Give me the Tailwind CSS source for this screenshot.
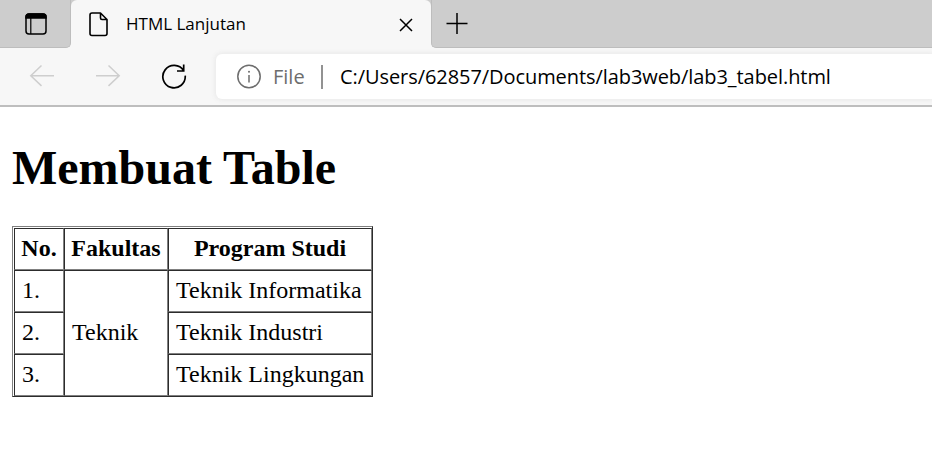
<!DOCTYPE html>
<html lang="id">
<head>
<meta charset="utf-8">
<title>HTML Lanjutan</title>
<script src="https://cdn.jsdelivr.net/npm/@tailwindcss/browser@4"></script>
</head>
<body class="w-[932px] h-[462px] overflow-hidden bg-white text-black">
<header class="h-[107px] bg-[#f7f7f7] border-b-2 border-[#bebebe] font-['Open_Sans',sans-serif]">
  <div class="flex h-12 bg-[#f7f7f7]">
    <div class="w-[71px] h-12 bg-[#cdcdcd] rounded-br-[5px] border-b border-r border-[#bdbdbd] pl-[25px] pt-[13px]">
      <svg width="22" height="22" viewBox="0 0 22 22" fill="none" stroke="#000" stroke-width="1.5"><rect x="1" y="1" width="20" height="20" rx="3"/><path d="M1 5V4a3 3 0 0 1 3-3h14a3 3 0 0 1 3 3v1z" fill="#000"/><path d="M5.8 5v16" stroke-width="1.2"/></svg>
    </div>
    <div class="w-[360px] h-12 bg-[#cdcdcd]">
      <div class="flex h-full bg-[#f7f7f7] rounded-t-[6px]">
        <svg class="mt-3 ml-[18px] shrink-0" width="20" height="25" viewBox="0 0 20 25" fill="none" stroke="#000" stroke-width="1.6" stroke-linejoin="round"><path d="M3 1H11.5L18 7.5V21.5a2 2 0 0 1-2 2H3a2 2 0 0 1-2-2V3A2 2 0 0 1 3 1zM11.5 1v5A1.5 1.5 0 0 0 13 7.5h5"/></svg>
        <span class="ml-[17px] w-[260px] mt-[11px] text-[17px] leading-[26px] tracking-[0px]">HTML Lanjutan</span>
        <svg class="mt-[18px] ml-[13px] shrink-0" width="14" height="14" viewBox="0 0 14 14" stroke="#000" stroke-width="1.5"><path d="M1 1l12 12M13 1L1 13"/></svg>
      </div>
    </div>
    <div class="flex-1 h-12 bg-[#cdcdcd] rounded-bl-[5px] border-b border-l border-[#bdbdbd] pl-[14px] pt-[13px]">
      <svg width="22" height="22" viewBox="0 0 22 22" stroke="#000" stroke-width="1.5"><path d="M.5 10.5h21M11 0v21"/></svg>
    </div>
  </div>
  <div class="flex h-[57px] pt-1.5">
    <svg class="mt-[10px] ml-[29px] shrink-0" width="26" height="24" viewBox="0 0 26 24" fill="none" stroke="#cecece" stroke-width="1.5"><path d="M25 11.7H2M12.5 1.5L1.8 11.7l10.7 10.2"/></svg>
    <svg class="mt-[10px] ml-[40px] shrink-0" width="26" height="24" viewBox="0 0 26 24" fill="none" stroke="#cecece" stroke-width="1.5"><path d="M1 11.7h23M13.5 1.5l10.7 10.2-10.7 10.2"/></svg>
    <svg class="mt-[9px] ml-[40px] shrink-0" width="26" height="27" viewBox="0 0 26 27" fill="none" stroke="#000" stroke-width="1.7"><path d="M22.6 7.8A11.2 11.2 0 1 0 24.2 12.6M22.7 1.5v6.5h-6.7"/></svg>
    <div class="ml-[29px] flex-1 h-[45px] rounded-l-[6px] bg-white shadow-[0_0_5px_1px_#e8e8e8] flex">
      <svg class="mt-[10px] ml-[20px] shrink-0" width="26" height="26" viewBox="0 0 26 26" fill="none" stroke="#6d6d6d" stroke-width="1.5"><circle cx="13" cy="12.5" r="11.2"/><path d="M13 11v7.5"/><circle cx="13" cy="7.7" r="1" fill="#6d6d6d" stroke="none"/></svg>
      <span class="ml-[11px] w-[48px] mt-[9px] text-[20px] leading-[28px] text-[#6d6d6d]">File</span>
      <span class="mt-[11px] w-[2px] h-[24px] bg-[#929292]"></span>
      <span class="ml-[17px] mt-[9px] text-[20px] leading-[28px] tracking-[-0.07px] whitespace-nowrap">C:/Users/62857/Documents/lab3web/lab3_tabel.html</span>
    </div>
  </div>
</header>
<main class="pl-3 font-['Liberation_Serif',serif]">
  <h1 class="pt-[33px] text-[48px] leading-[55px] font-bold whitespace-nowrap">Membuat Table</h1>
  <table class="mt-[31px] w-[361px] table-fixed border-separate border-spacing-0 border border-t-[#808080] border-l-[#808080] border-r-[#2c2c2c] border-b-[#2c2c2c] pl-px pt-px text-[24px] leading-[28px] whitespace-nowrap [&_th]:border [&_td]:border [&_th]:border-t-[#2c2c2c] [&_th]:border-l-[#2c2c2c] [&_th]:border-r-[#808080] [&_th]:border-b-[#808080] [&_td]:border-t-[#2c2c2c] [&_td]:border-l-[#2c2c2c] [&_td]:border-r-[#808080] [&_td]:border-b-[#808080] [&_td]:px-[7px] [&_td]:pt-0 [&_td]:pb-[2px] [&_th]:px-0 [&_th]:pt-0 [&_th]:pb-[2px]">
    <colgroup><col class="w-[50px]"><col class="w-[104px]"><col class="w-[204px]"></colgroup>
    <tr class="h-[42px]"><th>No.</th><th>Fakultas</th><th>Program Studi</th></tr>
    <tr class="h-[42px]"><td>1.</td><td rowspan="3">Teknik</td><td>Teknik Informatika</td></tr>
    <tr class="h-[42px]"><td>2.</td><td>Teknik Industri</td></tr>
    <tr class="h-[42px]"><td>3.</td><td>Teknik Lingkungan</td></tr>
  </table>
</main>
</body>
</html>
